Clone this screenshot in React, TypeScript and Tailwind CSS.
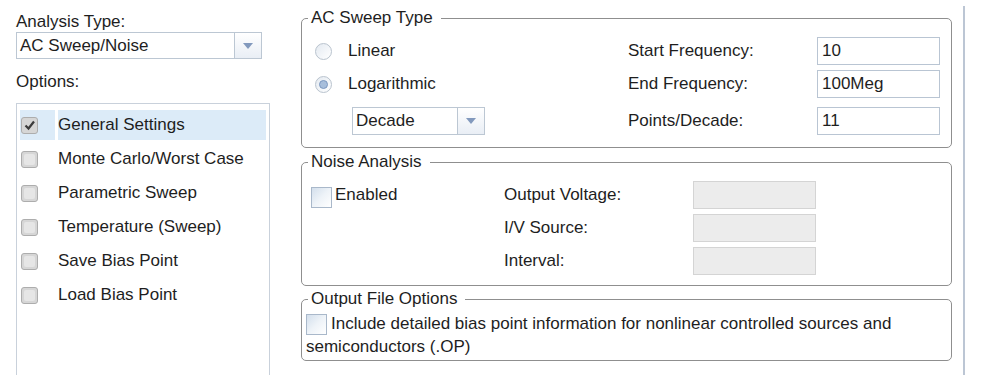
import React from "react";

const options = [
    "General Settings",
    "Monte Carlo/Worst Case",
    "Parametric Sweep",
    "Temperature (Sweep)",
    "Save Bias Point",
    "Load Bias Point",
];

function Arrow() {
    return (
        <svg width="10" height="6" viewBox="0 0 10 6">
            <path d="M0 0h10L5 6z" fill="#8299bd" />
        </svg>
    );
}

function Dropdown({ value, className }: { value: string; className: string }) {
    return (
        <div className={`flex border border-[#bcc7d3] bg-white ${className}`}>
            <div className="flex flex-1 items-center pl-[3px]">{value}</div>
            <div className="flex w-[27px] items-center justify-center border-l border-[#bcc7d3] bg-gradient-to-b from-white to-[#e9eef5]">
                <Arrow />
            </div>
        </div>
    );
}

function TextInput({ value, disabled }: { value?: string; disabled?: boolean }) {
    return (
        <div
            className={`flex h-[28px] w-[123px] items-center border px-[4px] ${
                disabled ? "border-[#d4d4d4] bg-[#ececec]" : "border-[#b9c5d3] bg-white"
            }`}
        >
            {value}
        </div>
    );
}

function ListCheck({ checked }: { checked?: boolean }) {
    return (
        <div className="flex h-[17px] w-[17px] items-center justify-center rounded-[3px] border border-[#adadad] bg-[#d6d6d6]">
            {checked ? (
                <svg width="13" height="13" viewBox="0 0 13 13">
                    <path d="M2.5 6.5l3 3 5.5-7" fill="none" stroke="#3b3b3b" strokeWidth="2.2" />
                </svg>
            ) : (
                <div className="h-[11px] w-[11px] rounded-[2px] bg-[#e6e6e6]" />
            )}
        </div>
    );
}

function BlueCheck({ className = "" }: { className?: string }) {
    return (
        <span
            className={`inline-block h-[21px] w-[21px] border border-[#a9b8ca] bg-gradient-to-br from-[#d3dfec] via-[#eef3f8] to-white ${className}`}
        />
    );
}

function Radio({ checked }: { checked?: boolean }) {
    return (
        <div className="flex h-[17px] w-[17px] items-center justify-center rounded-full border border-[#b9c3ce] bg-gradient-to-br from-[#e4eaf1] to-white">
            {checked && <div className="h-[9px] w-[9px] rounded-full border border-[#7c98c0] bg-[#a7bedb]" />}
        </div>
    );
}

// legend sits in the fieldset's padding box, so padding goes on the inner div
function Group({
    title,
    className = "",
    bodyClassName = "",
    children,
}: {
    title: string;
    className?: string;
    bodyClassName?: string;
    children: React.ReactNode;
}) {
    return (
        <fieldset className={`rounded-[5px] border border-[#8f8f8f] ${className}`}>
            <legend className="ml-[6px] pl-[3px] pr-[8px] leading-[20px]">{title}</legend>
            <div className={bodyClassName}>{children}</div>
        </fieldset>
    );
}

export default function App() {
    return (
        <div className="flex h-[375px] w-[1005px] overflow-hidden bg-white font-['Liberation_Sans',Arial,sans-serif] text-[17px] text-[#1e1e1e]">
            {/* left: analysis type + options list */}
            <div className="flex w-[270px] flex-col pl-4 pt-[12px]">
                <p className="leading-[20px]">Analysis Type:</p>
                <Dropdown value="AC Sweep/Noise" className="h-[27px] w-[246px]" />
                <p className="mt-[13px] leading-[20px]">Options:</p>
                <div className="mt-[11px] flex flex-1 flex-col gap-[4px] border border-b-0 border-[#c9d1db] px-[3px] pt-[6px]">
                    {options.map((o, i) => (
                        <div key={o} className="flex h-[30px] gap-[3px]">
                            <div className={`flex w-[35px] items-center pl-[1px] ${i === 0 ? "bg-[#dcebf8]" : ""}`}>
                                <ListCheck checked={i === 0} />
                            </div>
                            <div className={`flex flex-1 items-center ${i === 0 ? "bg-[#dcebf8]" : ""}`}>{o}</div>
                        </div>
                    ))}
                </div>
            </div>

            {/* right: settings */}
            <div className="ml-[31px] flex w-[651px] flex-col pt-[8px]">
                <Group title="AC Sweep Type" bodyClassName="pb-[12px] pl-[13px]">
                    <div className="mt-[9px] flex h-[28px] items-center">
                        <div className="flex w-[313px] items-center gap-[16px]">
                            <Radio />
                            <span>Linear</span>
                        </div>
                        <div className="w-[189px]">Start Frequency:</div>
                        <TextInput value="10" />
                    </div>
                    <div className="mt-[5px] flex h-[28px] items-center">
                        <div className="flex w-[313px] items-center gap-[16px]">
                            <Radio checked />
                            <span>Logarithmic</span>
                        </div>
                        <div className="w-[189px]">End Frequency:</div>
                        <TextInput value="100Meg" />
                    </div>
                    <div className="mt-[9px] flex h-[28px] items-center">
                        <div className="w-[313px] pl-[37px]">
                            <Dropdown value="Decade" className="h-[28px] w-[133px]" />
                        </div>
                        <div className="w-[189px]">Points/Decade:</div>
                        <TextInput value="11" />
                    </div>
                </Group>

                <Group title="Noise Analysis" className="mt-[4px]" bodyClassName="pb-[10px] pl-[9px]">
                    <div className="mt-[9px] flex h-[28px] items-center">
                        <div className="flex w-[193px] items-center gap-[3px]">
                            <BlueCheck className="mt-[4px]" />
                            <span>Enabled</span>
                        </div>
                        <div className="w-[189px]">Output Voltage:</div>
                        <TextInput disabled />
                    </div>
                    <div className="mt-[5px] flex h-[28px] items-center">
                        <div className="w-[193px]" />
                        <div className="w-[189px]">I/V Source:</div>
                        <TextInput disabled />
                    </div>
                    <div className="mt-[5px] flex h-[28px] items-center">
                        <div className="w-[193px]" />
                        <div className="w-[189px]">Interval:</div>
                        <TextInput disabled />
                    </div>
                </Group>

                <Group title="Output File Options" className="mt-[3px]">
                    <p className="px-[4px] pb-[2px] pt-[3px] leading-[23px]">
                        <BlueCheck className="mr-[4px] align-middle" />
                        Include detailed bias point information for nonlinear controlled sources and semiconductors (.OP)
                    </p>
                </Group>
            </div>

            <div className="ml-[11px] mt-[6px] w-[2px] bg-[#bcc6d4]" />
        </div>
    );
}
